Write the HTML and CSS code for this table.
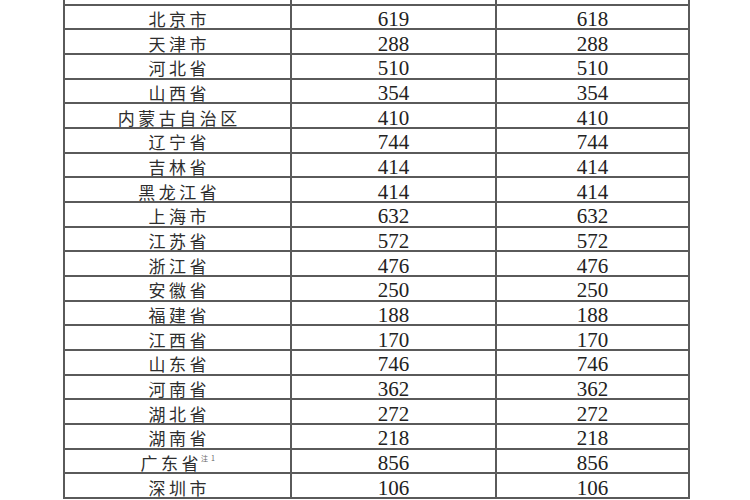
FILE: index.html
```html
<!DOCTYPE html>
<html lang="zh-CN">
<head>
<meta charset="utf-8">
<title>各地数据表</title>
<link rel="stylesheet" href="styles.css">
</head>
<body>
<table class="data">
  <colgroup><col class="c1"><col class="c2"><col class="c3"></colgroup>
  <tbody>
    <tr class="head"><td></td><td></td><td></td></tr>
    <tr><td class="name">北京市</td><td>619</td><td>618</td></tr>
    <tr><td class="name">天津市</td><td>288</td><td>288</td></tr>
    <tr><td class="name">河北省</td><td>510</td><td>510</td></tr>
    <tr><td class="name">山西省</td><td>354</td><td>354</td></tr>
    <tr><td class="name">内蒙古自治区</td><td>410</td><td>410</td></tr>
    <tr><td class="name">辽宁省</td><td>744</td><td>744</td></tr>
    <tr><td class="name">吉林省</td><td>414</td><td>414</td></tr>
    <tr><td class="name">黑龙江省</td><td>414</td><td>414</td></tr>
    <tr><td class="name">上海市</td><td>632</td><td>632</td></tr>
    <tr><td class="name">江苏省</td><td>572</td><td>572</td></tr>
    <tr><td class="name">浙江省</td><td>476</td><td>476</td></tr>
    <tr><td class="name">安徽省</td><td>250</td><td>250</td></tr>
    <tr><td class="name">福建省</td><td>188</td><td>188</td></tr>
    <tr><td class="name">江西省</td><td>170</td><td>170</td></tr>
    <tr><td class="name">山东省</td><td>746</td><td>746</td></tr>
    <tr><td class="name">河南省</td><td>362</td><td>362</td></tr>
    <tr><td class="name">湖北省</td><td>272</td><td>272</td></tr>
    <tr><td class="name">湖南省</td><td>218</td><td>218</td></tr>
    <tr><td class="name">广东省<sup class="note">注1</sup></td><td>856</td><td>856</td></tr>
    <tr><td class="name">深圳市</td><td>106</td><td>106</td></tr>
  </tbody>
</table>
</body>
</html>
```
FILE: styles.css
```css
html, body {
  margin: 0;
  padding: 0;
  background: #ffffff;
  overflow: hidden;
}

.data {
  border-collapse: collapse;
  table-layout: fixed;
  width: 627px;
  margin: -21px 0 0 63px;
  font-family: "Liberation Serif", "Times New Roman", serif;
  color: #222222;
}

.c1 { width: 227px; }
.c2 { width: 205px; }
.c3 { width: 193px; }

.data td {
  border: 2px solid #5a5a5a;
  height: 24.68px;
  padding: 4px 0 0 0;
  box-sizing: border-box;
  text-align: center;
  vertical-align: middle;
  font-size: 21px;
  line-height: 16px;
  white-space: nowrap;
  overflow: visible;
}

.data td.name {
  font-family: "Noto Sans CJK SC", "Noto Sans", sans-serif;
  font-size: 17px;
  letter-spacing: 3.5px;
  text-indent: 3.5px;
  color: #2e2e2e;
}

.note {
  font-size: 7px;
  letter-spacing: 3px;
  margin-left: -1px;
  vertical-align: 9px;
  line-height: 0;
  color: #666666;
}
```
